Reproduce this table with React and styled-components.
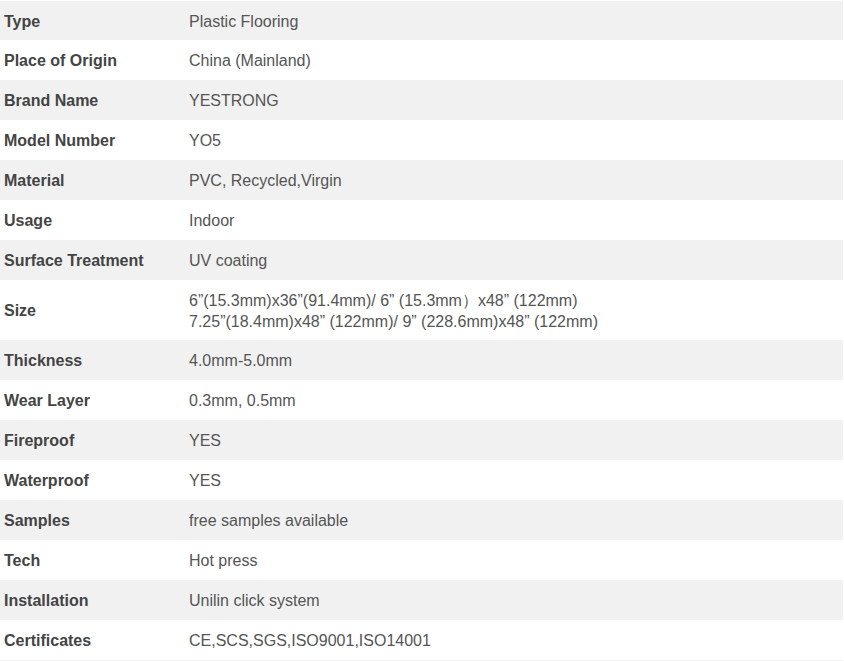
import React from "react";
import styled, { createGlobalStyle } from "styled-components";

const GlobalStyle = createGlobalStyle`
  html, body {
    margin: 0;
    padding: 0;
    background: #fff;
  }
  body {
    font-family: Arial, "Liberation Sans", sans-serif;
    font-size: 16px;
  }
`;

const Table = styled.div`
  width: 843px;
  padding-top: 1px;
  display: flex;
  flex-direction: column;
`;

const Row = styled.div`
  display: grid;
  grid-template-columns: 185px 1fr;
  align-items: center;
  min-height: ${(p) => (p.first ? "39px" : "40px")};
  background: ${(p) => (p.shaded ? "#f1f1f1" : "#fff")};
  box-sizing: border-box;
  padding: ${(p) => (p.tall ? "10px 0 8px" : "2px 0 0")};
`;

const Label = styled.div`
  padding-left: 4px;
  font-weight: bold;
  color: #444;
  line-height: 20px;
`;

const Value = styled.div`
  padding-left: 4px;
  color: #555;
  line-height: ${(p) => (p.multi ? "21px" : "20px")};
`;

const Tail = styled.div`
  height: 1px;
  background: #f1f1f1;
`;

const specs = [
  ["Type", ["Plastic Flooring"]],
  ["Place of Origin", ["China (Mainland)"]],
  ["Brand Name", ["YESTRONG"]],
  ["Model Number", ["YO5"]],
  ["Material", ["PVC, Recycled,Virgin"]],
  ["Usage", ["Indoor"]],
  ["Surface Treatment", ["UV coating"]],
  [
    "Size",
    [
      "6\u201d(15.3mm)x36\u201d(91.4mm)/ 6\u201d (15.3mm\uff09x48\u201d (122mm)",
      "7.25\u201d(18.4mm)x48\u201d (122mm)/ 9\u201d (228.6mm)x48\u201d (122mm)",
    ],
  ],
  ["Thickness", ["4.0mm-5.0mm"]],
  ["Wear Layer", ["0.3mm, 0.5mm"]],
  ["Fireproof", ["YES"]],
  ["Waterproof", ["YES"]],
  ["Samples", ["free samples available"]],
  ["Tech", ["Hot press"]],
  ["Installation", ["Unilin click system"]],
  ["Certificates", ["CE,SCS,SGS,ISO9001,ISO14001"]],
];

function App() {
  return (
    <>
      <GlobalStyle />
      <Table>
        {specs.map(([label, lines], i) => (
          <Row
            key={label}
            shaded={i % 2 === 0}
            first={i === 0}
            tall={lines.length > 1}
          >
            <Label>{label}</Label>
            <Value multi={lines.length > 1}>
              {lines.map((line) => (
                <div key={line}>{line}</div>
              ))}
            </Value>
          </Row>
        ))}
        <Tail />
      </Table>
    </>
  );
}

export default App;
